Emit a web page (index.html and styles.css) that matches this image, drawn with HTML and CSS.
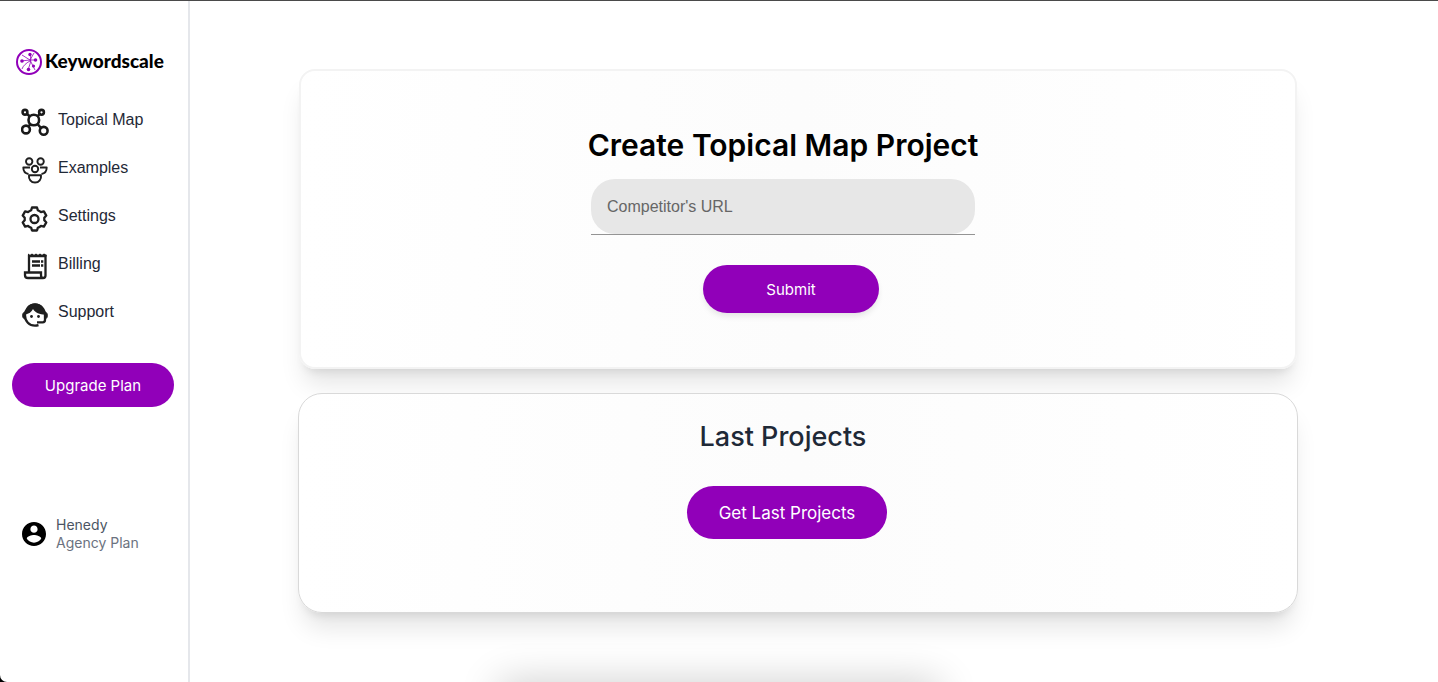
FILE: index.html
```html
<!DOCTYPE html>
<html lang="en">
<head>
    <meta charset="UTF-8">
    <meta name="viewport" content="width=device-width, initial-scale=1.0">
    <title>Keywordscale - Topical Map</title>
    <link rel="stylesheet" href="styles.css">
</head>
<body>
    <aside class="sidebar">
        <a href="#" class="logo">
            <svg class="logo-mark" viewBox="0 0 26 26" fill="none" stroke="#9100b9">
                <circle cx="13" cy="13" r="12" stroke-width="2"/>
                <path d="M14 5c1 4 1 7 0 10l-2 6M5 12l9-1 6 0M6 6l8 5 3 6M14 11l4-7M14 12c-4 2-7 5-8 8M17 17l2 4" stroke-width="0.8"/>
                <g fill="#9100b9" stroke="none">
                    <circle cx="14" cy="5.500" r="1.700"/>
                    <circle cx="6" cy="12" r="1.800"/>
                    <circle cx="19.500" cy="11" r="1.800"/>
                    <circle cx="12.500" cy="20.500" r="1.800"/>
                    <circle cx="17.500" cy="17" r="1.600"/>
                </g>
            </svg>
            <span>Keywordscale</span>
        </a>

        <nav class="nav-links">
            <a href="#">
                <svg class="nav-icon" viewBox="0 0 28 28" fill="none" stroke="#1a1a1a" stroke-width="2.600">
                    <circle cx="12.800" cy="12" r="5.300"/>
                    <circle cx="4" cy="4.300" r="2.400"/>
                    <circle cx="20.500" cy="4.300" r="2.400"/>
                    <circle cx="5" cy="21.500" r="3.900"/>
                    <circle cx="22.700" cy="22.800" r="3.900"/>
                    <path d="M6 6l3 2.500M18.500 6l-2 2.500M9.500 16l-2 2.500M16.500 16l3.500 4"/>
                </svg>
                <span>Topical Map</span>
            </a>
            <a href="#">
                <svg class="nav-icon" viewBox="0 0 28 28" fill="none" stroke="#1f1f1f" stroke-width="1.900" stroke-linejoin="round">
                    <circle cx="8.200" cy="5.500" r="3.200"/>
                    <circle cx="19.600" cy="5.500" r="3.200"/>
                    <circle cx="14" cy="13" r="3.200"/>
                    <path d="M9 11.500H2.300c0 3.500 2 6 5.200 6.500M19 11.500h6.700c0 3.500-2 6-5.200 6.500"/>
                    <path d="M8 19.300h12c.6 3.700-2 7.200-6 7.200s-6.600-3.500-6-7.200z"/>
                </svg>
                <span>Examples</span>
            </a>
            <a href="#">
                <svg class="nav-icon" viewBox="0 0 28 28" fill="none" stroke="#1f1f1f" stroke-width="2.300" stroke-linejoin="round">
                    <path d="M11 3.500h5l.8 2.700q2 .8 3 1.900l3.100-.7 2.400 4.200-2 2.200v2.400l2 2.200-2.400 4.200-3.100-.7q-1 1.100-3 1.900l-.8 2.700h-5l-.8-2.700q-2-.8-3-1.900l-3.100.7-2.400-4.200 2-2.200v-2.400l-2-2.200 2.400-4.200 3.100.7q1-1.100 3-1.900z"/>
                    <circle cx="13.500" cy="15" r="4"/>
                </svg>
                <span>Settings</span>
            </a>
            <a href="#">
                <svg class="nav-icon" viewBox="0 0 28 28" fill="none" stroke="#1f1f1f" stroke-width="2.300">
                    <path d="M8 20V4h16.500v19.500c0 1.700-1 2.500-2.500 2.500H7c-2 0-3-1-3-2.800V20.500h16V23c0 2 .8 3 2.200 3"/>
                    <path d="M7 4V1.500L9 3l2-1.500L13 3l2-1.500L17 3l2-1.500L21 3l2-1.500L25.600 3v1.500z" fill="#1f1f1f" stroke="none"/>
                    <path d="M11 9.500h8M11 13.500h8M20 9.500h2.300M20 13.500h2.300"/>
                </svg>
                <span>Billing</span>
            </a>
            <a href="#">
                <svg class="nav-icon" viewBox="0 0 28 28" fill="none" stroke="#1f1f1f" stroke-width="2.300">
                    <path d="M17.500 25.200c-1 .3-2.300.5-3.500.5-5.800 0-10-4.500-10-10.200S8.200 4.500 14 4.500s10 5 10 11V20c0 1.500-.8 2.300-2.300 2.300H16"/>
                    <path d="M4 12v7C.8 18.700.8 12.300 4 12zM24 12v7c3.200-.3 3.200-6.700 0-7z" fill="#1f1f1f" stroke-width="1"/>
                    <path d="M4 14.500c4-.5 6.500-2.500 8-5.500 2.500 4 6.500 5.500 12 5.500C24 8 20 3.500 14 3.500S4.500 8 4 14.500z" fill="#1f1f1f" stroke="none"/>
                    <circle cx="10.500" cy="16.500" r="1.400" fill="#1f1f1f" stroke="none"/>
                    <circle cx="17.500" cy="16.500" r="1.400" fill="#1f1f1f" stroke="none"/>
                </svg>
                <span>Support</span>
            </a>
        </nav>

        <button type="button" class="btn btn-upgrade">Upgrade Plan</button>

        <div class="user">
            <svg class="user-icon" viewBox="2 2 20 20">
                <path d="M12 2C6.480 2 2 6.480 2 12s4.480 10 10 10 10-4.480 10-10S17.520 2 12 2zm0 3c1.660 0 3 1.340 3 3s-1.340 3-3 3-3-1.340-3-3 1.340-3 3-3zm0 14.200c-2.500 0-4.710-1.280-6-3.220.03-1.990 4-3.080 6-3.080 1.990 0 5.970 1.090 6 3.080-1.290 1.940-3.500 3.220-6 3.220z"/>
            </svg>
            <div>
                <p class="user-name">Henedy</p>
                <p class="user-plan">Agency Plan</p>
            </div>
        </div>
    </aside>

    <main class="main-content">
        <section class="card card-create">
            <h1>Create Topical Map Project</h1>
            <form class="create-form">
                <div class="url-field">
                    <input type="text" class="url-input" placeholder="Competitor's URL" aria-label="Competitor's URL">
                </div>
                <button type="button" class="btn btn-submit">Submit</button>
            </form>
        </section>

        <section class="card card-projects">
            <h2>Last Projects</h2>
            <button type="button" class="btn btn-projects">Get Last Projects</button>
        </section>
    </main>

    <div class="bottom-glow"></div>
</body>
</html>
```

FILE: styles.css
```css
:root {
    --primary-color: #9100b9;
    --text-dark: #1f2937;
    --border: #e5e7eb;
    --shadow: 0 20px 25px -5px rgba(0,0,0,0.1), 0 8px 10px -6px rgba(0,0,0,0.1);
}

* {
    margin: 0;
    padding: 0;
    box-sizing: border-box;
}

html {
    background: #000;
}

body {
    display: flex;
    min-height: 100vh;
    font-family: 'Inter', sans-serif;
    color: var(--text-dark);
    background: #fff;
    border-top: 1px solid #4a4a4a;
    border-bottom-left-radius: 7px;
    overflow: hidden;
}

.sidebar {
    flex: none;
    width: 190px;
    padding: 47px 14px 0 12px;
    border-right: 2px solid var(--border);
}

.logo {
    display: flex;
    align-items: center;
    gap: 3px;
    padding-left: 4px;
    height: 28px;
    font-family: 'Lato', sans-serif;
    font-size: 19px;
    font-weight: 900;
    line-height: 24px;
    color: #000;
    text-decoration: none;
}

.logo span {
    padding-bottom: 3px;
}

.logo-mark {
    flex: none;
    width: 26px;
    height: 26px;
}

.nav-links {
    display: flex;
    flex-direction: column;
    gap: 20px;
    margin: 32px 0 35px;
    padding-left: 9px;
}

.nav-links a {
    display: flex;
    gap: 9px;
    height: 28px;
    font-family: 'Liberation Sans', sans-serif;
    font-size: 16px;
    line-height: 24px;
    color: var(--text-dark);
    text-decoration: none;
}

.nav-icon {
    width: 28px;
    height: 28px;
}

.btn {
    border: none;
    border-radius: 999px;
    background: var(--primary-color);
    color: #fff;
    font-family: 'Inter', sans-serif;
    font-size: 15px;
    font-weight: 400;
    cursor: pointer;
}

.btn-upgrade {
    width: 100%;
    height: 44px;
}

.user {
    display: flex;
    align-items: center;
    gap: 10px;
    margin-top: 109px;
    padding-left: 10px;
    font-size: 14px;
    line-height: 18px;
}

.user-icon {
    width: 24px;
    height: 24px;
}

.user-name {
    color: #4b5563;
}

.user-plan {
    color: #6b7280;
}

.main-content {
    flex: 1;
    display: flex;
    flex-direction: column;
    gap: 24px;
    padding: 68px 140px 0 108px;
}

.card {
    display: flex;
    flex-direction: column;
    align-items: center;
    background: linear-gradient(to right, #fff, #fcfcfc 50%, #fff);
    box-shadow: var(--shadow);
}

.card-create {
    margin: 0 1px;
    padding: 54px 30px 54px 0;
    border: 2px solid #f3f3f3;
    border-radius: 16px;
}

.card-projects {
    padding: 23px 30px 73px 0;
    border: 1px solid #d9d9d9;
    border-radius: 24px;
}

h1 {
    font-size: 30px;
    font-weight: 600;
    line-height: 40px;
    color: #000;
}

h2 {
    margin-bottom: 29px;
    font-size: 27px;
    font-weight: 500;
    line-height: 40px;
}

.create-form {
    display: flex;
    flex-direction: column;
    align-items: center;
    margin-top: 14px;
}

.url-field {
    width: 384px;
    border-bottom: 1px solid #949494;
}

.url-input {
    display: block;
    width: 100%;
    height: 55px;
    padding: 0 16px;
    border: none;
    border-radius: 24px;
    background: #e7e7e7;
    font-family: 'Liberation Sans', sans-serif;
    font-size: 16px;
}

.url-input::placeholder {
    color: #666;
}

.btn-submit {
    width: 176px;
    height: 48px;
    margin: 30px 0 0 16px;
    box-shadow: 0 4px 6px -1px rgba(0,0,0,0.1);
}

.btn-projects {
    width: 200px;
    height: 53px;
    margin-left: 8px;
    font-size: 17px;
}

.bottom-glow {
    position: fixed;
    left: 50%;
    bottom: -40px;
    width: 440px;
    height: 40px;
    margin-left: -220px;
    box-shadow: 0 0 40px rgba(0,0,0,0.2);
}
```
